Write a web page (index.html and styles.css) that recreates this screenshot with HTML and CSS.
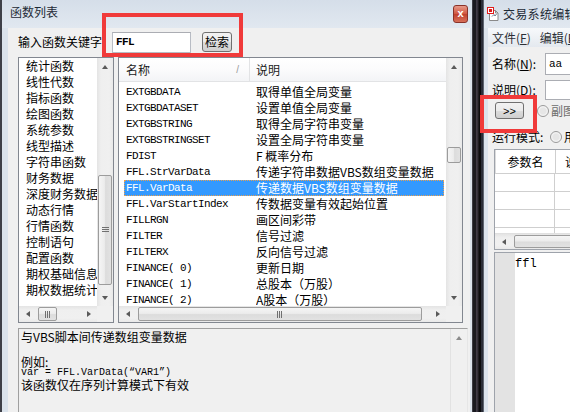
FILE: index.html
```html
<!DOCTYPE html>
<html lang="zh-CN">
<head>
    <meta charset="UTF-8">
    <title>函数列表</title>
    <link rel="stylesheet" href="styles.css">
</head>
<body>
<div class="desk">
    <!-- 函数列表 对话框 -->
    <div class="win win-func">
        <div class="titlebar">
            <span class="title">函数列表</span>
            <span class="close">x</span>
        </div>
        <div class="frame">
            <div class="client">
                <div class="search-row">
                    <label class="search-label" for="kw">输入函数关键字</label>
                    <input id="kw" class="search-input" type="text" value="FFL">
                    <button class="btn btn-search" type="button">检索</button>
                </div>

                <div class="lists">
                    <div class="listbox cat-list">
                        <ul class="cat-items">
                            <li>统计函数</li>
                            <li>线性代数</li>
                            <li>指标函数</li>
                            <li>绘图函数</li>
                            <li>系统参数</li>
                            <li>线型描述</li>
                            <li>字符串函数</li>
                            <li>财务数据</li>
                            <li>深度财务数据</li>
                            <li>动态行情</li>
                            <li>行情函数</li>
                            <li>控制语句</li>
                            <li>配置函数</li>
                            <li>期权基础信息</li>
                            <li>期权数据统计</li>
                        </ul>
                        <div class="vscroll">
                            <span class="sb-btn"><i class="arr arr-up"></i></span>
                            <span class="sb-track"><span class="thumb" style="margin-top:100px;height:110px"><i class="grip grip-v"></i></span></span>
                            <span class="sb-btn"><i class="arr arr-down"></i></span>
                        </div>
                        <div class="hscroll">
                            <span class="sb-btn"><i class="arr arr-left"></i></span>
                            <span class="sb-track"><span class="thumb" style="margin-left:2px;width:19px"><i class="grip grip-h"></i></span></span>
                            <span class="sb-btn"><i class="arr arr-right"></i></span>
                        </div>
                        <div class="sb-corner"></div>
                    </div>

                    <div class="listbox fn-list">
                        <div class="fn-main">
                            <div class="fn-head">
                                <span class="col-name">名称<span class="sort">/</span></span>
                                <span class="col-desc">说明</span>
                            </div>
                            <div class="fn-rows">
                                <div class="row"><span class="c-name">EXTGBDATA</span><span class="c-desc">取得单值全局变量</span></div>
                                <div class="row"><span class="c-name">EXTGBDATASET</span><span class="c-desc">设置单值全局变量</span></div>
                                <div class="row"><span class="c-name">EXTGBSTRING</span><span class="c-desc">取得全局字符串变量</span></div>
                                <div class="row"><span class="c-name">EXTGBSTRINGSET</span><span class="c-desc">设置全局字符串变量</span></div>
                                <div class="row"><span class="c-name">FDIST</span><span class="c-desc">F 概率分布</span></div>
                                <div class="row"><span class="c-name">FFL.StrVarData</span><span class="c-desc">传递字符串数据VBS数组变量数据</span></div>
                                <div class="row selected"><span class="c-name">FFL.VarData</span><span class="c-desc">传递数据VBS数组变量数据</span></div>
                                <div class="row"><span class="c-name">FFL.VarStartIndex</span><span class="c-desc">传数据变量有效起始位置</span></div>
                                <div class="row"><span class="c-name">FILLRGN</span><span class="c-desc">画区间彩带</span></div>
                                <div class="row"><span class="c-name">FILTER</span><span class="c-desc">信号过滤</span></div>
                                <div class="row"><span class="c-name">FILTERX</span><span class="c-desc">反向信号过滤</span></div>
                                <div class="row"><span class="c-name">FINANCE( 0)</span><span class="c-desc">更新日期</span></div>
                                <div class="row"><span class="c-name">FINANCE( 1)</span><span class="c-desc">总股本（万股）</span></div>
                                <div class="row"><span class="c-name">FINANCE( 2)</span><span class="c-desc">A股本（万股）</span></div>
                            </div>
                        </div>
                        <div class="vscroll">
                            <span class="sb-btn"><i class="arr arr-up"></i></span>
                            <span class="sb-track"><span class="thumb" style="margin-top:72px;height:16px"></span></span>
                            <span class="sb-btn"><i class="arr arr-down"></i></span>
                        </div>
                        <div class="hscroll">
                            <span class="sb-btn"><i class="arr arr-left"></i></span>
                            <span class="sb-track"><span class="thumb" style="margin-left:2px;width:284px"><i class="grip grip-h"></i></span></span>
                            <span class="sb-btn"><i class="arr arr-right"></i></span>
                        </div>
                        <div class="sb-corner"></div>
                    </div>
                </div>

                <div class="desc">
                    <div class="desc-text">
                        <div class="ln">与VBS脚本间传递数组变量数据</div>
                        <div class="ln"></div>
                        <div class="ln ln-short">例如:</div>
                        <div class="ln ln-code">var = FFL.VarData(“VAR1”)</div>
                        <div class="ln">该函数仅在序列计算模式下有效</div>
                    </div>
                    <div class="vscroll vscroll-flat">
                        <span class="sb-btn"><i class="arr arr-up arr-dim"></i></span>
                    </div>
                </div>
            </div>
        </div>
    </div>

    <div class="gap"></div>

    <!-- 交易系统编辑器 窗口 -->
    <div class="win win-edit">
        <div class="titlebar">
            <svg class="app-icon" width="12" height="14" viewBox="0 0 12 14">
                <path d="M2.5 3.5h6l2.5 2.5v7.5h-8.5z" fill="#fff" stroke="#8a8a8a"/>
                <path d="M8.5 3.5v2.5h2.5" fill="none" stroke="#8a8a8a"/>
                <path d="M5 9.5l2-2 1 1.5 1.5-2" fill="none" stroke="#6c7a8c"/>
                <rect x="0.5" y="0.5" width="6" height="6" fill="#fff" stroke="#e01c1c"/>
                <rect x="2" y="2" width="3" height="3" fill="#e01c1c"/>
            </svg>
            <span class="title">交易系统编辑器</span>
        </div>
        <div class="frame">
            <div class="client">
                <div class="menubar">
                    <span class="menu">文件(<u>F</u>)</span>
                    <span class="menu">编辑(<u>E</u>)</span>
                </div>
                <div class="edit-body">
                    <div class="field">
                        <span class="f-label">名称(<u>N</u>):</span>
                        <input class="f-input f-input-tall" type="text" value="aa">
                    </div>
                    <div class="field field-desc">
                        <span class="f-label">说明(<u>D</u>):</span>
                        <input class="f-input" type="text" value="">
                    </div>
                    <div class="field field-btn">
                        <button class="btn btn-more" type="button">&gt;&gt;</button>
                        <span class="radio"></span>
                        <span class="dim">副图</span>
                    </div>
                    <div class="field field-mode">
                        <span class="f-label">运行模式:</span>
                        <span class="radio"></span>
                        <span>用</span>
                    </div>
                    <div class="param-table">
                        <div class="pt-grid">
                            <div class="pt-head"><span class="pt-c1">参数名</span><span class="pt-c2">说明</span></div>
                            <div class="pt-row"><span class="pt-c1"></span><span class="pt-c2"></span></div>
                            <div class="pt-row"><span class="pt-c1"></span><span class="pt-c2"></span></div>
                            <div class="pt-row"><span class="pt-c1"></span><span class="pt-c2"></span></div>
                            <div class="pt-row"><span class="pt-c1"></span><span class="pt-c2"></span></div>
                        </div>
                        <div class="hscroll">
                            <span class="sb-btn"><i class="arr arr-left"></i></span>
                            <span class="sb-track"><span class="thumb" style="margin-left:2px;width:120px"></span></span>
                        </div>
                    </div>
                    <div class="editor">
                        <div class="gutter"></div>
                        <div class="code">ffl</div>
                    </div>
                </div>
            </div>
        </div>
    </div>

    <div class="mark mark-search"></div>
    <div class="mark mark-more"></div>
</div>
</body>
</html>
```

FILE: styles.css
```css
* {
    box-sizing: border-box;
}
html, body {
    margin: 0;
    padding: 0;
}
body {
    width: 570px;
    height: 412px;
    overflow: hidden;
    background: #16161c;
    font-family: "Noto Sans CJK SC", "Liberation Sans", sans-serif;
    font-size: 12px;
    color: #000;
}

.desk {
    position: relative;
    display: flex;
    width: 570px;
    height: 412px;
    overflow: hidden;
}

/* 窗口外框 */
.win {
    display: flex;
    flex-direction: column;
    flex-shrink: 0;
    height: 412px;
    background: #dbe3ec;
}
.titlebar {
    display: flex;
    align-items: flex-start;
    height: 28px;
    flex-shrink: 0;
    background: linear-gradient(#d5dee9, #e1e8f0);
}
.title {
    font-size: 12px;
    line-height: 16px;
    color: #1e2a36;
    white-space: nowrap;
}
.frame {
    flex: 1;
    display: flex;
    min-height: 0;
}
.client {
    flex: 1;
    min-width: 0;
    display: flex;
    flex-direction: column;
    background: #f0f0f0;
}

.win-func {
    width: 472px;
    border-left: 2px solid #3e4048;
}
.win-func .titlebar {
    padding: 4px 4px 0 8px;
    justify-content: space-between;
}
.win-func .frame {
    padding: 0 2px 0 6px;
}
.win-func .client {
    padding: 3px 2px 0 10px;
}
.close {
    width: 15px;
    height: 18px;
    margin-top: 1px;
    border: 1px solid #8a3229;
    border-radius: 3px;
    background: linear-gradient(#e79a8a, #d0553f 50%, #c0402c 51%, #d7705a);
    color: #fff;
    font: bold 11px/15px "Liberation Sans", sans-serif;
    text-align: center;
}

/* 搜索行 */
.search-row {
    display: flex;
    align-items: center;
    height: 22px;
}
.search-label {
    width: 84px;
    white-space: nowrap;
    line-height: 16px;
}
.search-input {
    width: 79px;
    height: 21px;
    margin: 0 0 0 10px;
    padding: 0 3px;
    border: 1px solid #b8bcc4;
    border-top-color: #abadb3;
    background: #fff;
    font: bold 11px "Liberation Mono", monospace;
    letter-spacing: -0.6px;
    outline: none;
}
.btn {
    border: 1px solid #707070;
    border-radius: 3px;
    background: linear-gradient(#f2f2f2, #ebebeb 50%, #dddddd 51%, #cfcfcf);
    padding: 0;
    color: #000;
    font-family: "Noto Sans CJK SC", sans-serif;
    font-size: 12px;
    line-height: 14px;
}
.btn-search {
    width: 30px;
    height: 20px;
    margin-left: 11px;
}

/* 两个列表 */
.lists {
    display: flex;
    gap: 4px;
    height: 266px;
    margin-top: 4px;
    flex-shrink: 0;
}
.listbox {
    display: grid;
    grid-template-columns: 1fr 16px;
    grid-template-rows: 1fr 16px;
    border: 1px solid #828790;
    background: #fff;
    overflow: hidden;
}
.cat-list {
    width: 96px;
}
.fn-list {
    width: 345px;
}
.cat-items {
    margin: 0;
    padding: 0 0 0 7px;
    list-style: none;
    overflow: hidden;
    min-height: 0;
}
.cat-items li {
    height: 16px;
    line-height: 16px;
    white-space: nowrap;
}

.fn-main {
    display: flex;
    flex-direction: column;
    min-width: 0;
    min-height: 0;
    overflow: hidden;
}
.fn-head {
    display: flex;
    height: 24px;
    flex-shrink: 0;
    background: linear-gradient(#ffffff, #fbfbfc 50%, #f3f4f6);
    border-bottom: 1px solid #e2e3e5;
    line-height: 23px;
    color: #1a1a1a;
}
.col-name {
    display: flex;
    justify-content: space-between;
    width: 131px;
    padding: 0 10px 0 7px;
    border-right: 1px solid #e2e3e5;
}
.sort {
    color: #9a9a9a;
    font: 10px/23px "Liberation Sans", sans-serif;
}
.col-desc {
    padding-left: 6px;
}
.fn-rows {
    flex: 1;
    min-height: 0;
    overflow: hidden;
    padding: 2px 2px 0 5px;
}
.row {
    display: flex;
    height: 16px;
    line-height: 16px;
    white-space: nowrap;
}
.c-name {
    width: 132px;
    flex-shrink: 0;
    padding-left: 2px;
    font-family: "Liberation Mono", monospace;
    font-size: 11px;
    letter-spacing: -0.6px;
}
.c-desc {
    overflow: hidden;
}
.row.selected {
    background: #3399ff;
    color: #fff;
    outline: 1px dotted #e8a050;
    outline-offset: -1px;
}

/* 滚动条 */
.vscroll {
    display: flex;
    flex-direction: column;
    min-height: 0;
    background: linear-gradient(to right, #e4e4e4, #efefef 25%, #f0f0f0 75%, #e9e9e9);
}
.hscroll {
    display: flex;
    min-width: 0;
    background: linear-gradient(#e4e4e4, #efefef 25%, #f0f0f0 75%, #e9e9e9);
}
.sb-btn {
    display: flex;
    align-items: center;
    justify-content: center;
    flex: 0 0 17px;
}
.sb-track {
    flex: 1;
    display: flex;
    flex-direction: column;
    min-height: 0;
    min-width: 0;
}
.hscroll .sb-track {
    flex-direction: row;
}
.thumb {
    display: flex;
    align-items: center;
    justify-content: center;
    flex-shrink: 0;
    border: 1px solid #9c9c9c;
    border-radius: 2px;
    background: linear-gradient(to right, #f5f5f5, #ececec 45%, #dcdcdc 55%, #e2e2e2);
}
.vscroll .thumb {
    margin-left: 1px;
    margin-right: 1px;
}
.hscroll .thumb {
    margin-top: 1px;
    margin-bottom: 1px;
    background: linear-gradient(#f5f5f5, #ececec 45%, #dcdcdc 55%, #e2e2e2);
}
.grip {
    display: block;
}
.grip-v {
    width: 7px;
    height: 6px;
    background: repeating-linear-gradient(#707070 0 1px, transparent 1px 2px);
}
.grip-h {
    width: 6px;
    height: 7px;
    background: repeating-linear-gradient(to right, #707070 0 1px, transparent 1px 2px);
}
.sb-corner {
    background: #f0f0f0;
}
.arr {
    display: block;
    width: 0;
    height: 0;
    border: 0 solid transparent;
}
.arr-up {
    border-width: 0 3.5px 4px;
    border-bottom-color: #5a5a5a;
}
.arr-down {
    border-width: 4px 3.5px 0;
    border-top-color: #5a5a5a;
}
.arr-left {
    border-width: 3.5px 4px 3.5px 0;
    border-right-color: #5a5a5a;
}
.arr-right {
    border-width: 3.5px 0 3.5px 4px;
    border-left-color: #5a5a5a;
}
.arr-up.arr-dim {
    border-bottom-color: #8c8c8c;
}

/* 说明区 */
.desc {
    display: grid;
    grid-template-columns: 1fr 17px;
    flex: 1;
    width: 450px;
    margin-top: 5px;
    border: 1px solid #a0a0a0;
    border-right-color: #e6e6e6;
    border-bottom: 0;
    background: #f0f0f0;
}
.desc-text {
    padding: 1px 2px;
}
.ln {
    height: 13px;
    line-height: 13px;
    white-space: nowrap;
}
.ln-short {
    height: 11px;
    line-height: 11px;
}
.ln-code {
    height: 11px;
    font: 10px/11px "Liberation Mono", monospace;
}
.vscroll-flat {
    background: #f0f0f0;
    border-left: 1px solid #e2e2e2;
}

/* 窗口间的桌面缝隙 */
.gap {
    width: 11px;
    flex-shrink: 0;
    background: linear-gradient(to right, #3c3d45 0, #3c3d45 1px, #1a1a20 1px, #1a1a20 4px, #45404c 4px, #2e2b34 6px, #0b0b0e 7px, #0b0b0e 9px, #2a2d38 9px);
}

/* 交易系统编辑器 */
.win-edit {
    width: 200px;
    border-left: 1px solid #5d6470;
}
.win-edit .titlebar {
    align-items: center;
    padding: 0 0 0 3px;
    gap: 4px;
}
.app-icon {
    flex-shrink: 0;
}
.win-edit .title {
    letter-spacing: 0.3px;
}
.win-edit .frame {
    padding-left: 4px;
}
.menubar {
    display: flex;
    gap: 9px;
    height: 19px;
    padding-left: 4px;
    background: linear-gradient(#f7f9fb, #e4e9ef);
    line-height: 19px;
    color: #2b2f36;
    white-space: nowrap;
}
.edit-body {
    flex: 1;
    display: flex;
    flex-direction: column;
    min-height: 0;
    padding-left: 4px;
}
.field {
    display: flex;
    align-items: center;
    white-space: nowrap;
}
.f-label {
    width: 53px;
    flex-shrink: 0;
    line-height: 16px;
}
.f-input {
    width: 80px;
    height: 20px;
    margin: 0;
    padding: 0 3px;
    border: 1px solid #abadb3;
    background: #fff;
    font: 11px "Liberation Mono", monospace;
    outline: none;
}
.f-input-tall {
    height: 22px;
}
.field:first-child {
    margin-top: 6px;
}
.field-desc {
    margin-top: 5px;
}
.field-btn {
    margin-top: 2px;
}
.btn-more {
    width: 29px;
    height: 17px;
    margin-left: 3px;
    margin-right: 13px;
    font: 11px/14px "Liberation Sans", sans-serif;
}
.radio {
    width: 12px;
    height: 12px;
    flex-shrink: 0;
    margin-right: 2px;
    border: 1px solid #9a9a9a;
    border-radius: 50%;
    background: radial-gradient(circle, #e6e6e6 40%, #f7f7f7 70%);
}
.dim {
    color: #6d6d6d;
}
.field-mode {
    margin-top: 9px;
}
.field-mode .f-label {
    width: 58px;
}

.param-table {
    display: flex;
    flex-direction: column;
    margin: 4px 0 0 2px;
    width: 120px;
    border: 1px solid #9ea3ab;
    background: #fff;
}
.pt-grid {
    height: 83px;
    overflow: hidden;
}
.pt-head, .pt-row {
    display: flex;
    border-bottom: 1px solid #cfcfcf;
}
.pt-head {
    height: 24px;
    line-height: 23px;
    border-left: 1px solid #dcdcdc;
}
.pt-row {
    height: 18px;
}
.pt-c1 {
    width: 60px;
    flex-shrink: 0;
    text-align: center;
    border-right: 1px solid #cfcfcf;
}
.pt-c2 {
    padding-left: 9px;
}
.param-table .hscroll {
    height: 16px;
    border-top: 1px solid #e0e0e0;
}

.editor {
    flex: 1;
    display: flex;
    margin: 2px 0 0 2px;
    border: 1px solid #9ea3ab;
    border-bottom: 0;
    background: #fff;
}
.gutter {
    width: 20px;
    flex-shrink: 0;
    background: #e3e3e3;
}
.code {
    padding-top: 4px;
    font: 12px/14px "Liberation Mono", monospace;
}

/* 红色标注框 */
.mark {
    position: absolute;
    border: 4px solid #f03a3a;
}
.mark-search {
    left: 102px;
    top: 13px;
    width: 141px;
    height: 44px;
}
.mark-more {
    left: 480px;
    top: 95px;
    width: 57px;
    height: 38px;
}
```
